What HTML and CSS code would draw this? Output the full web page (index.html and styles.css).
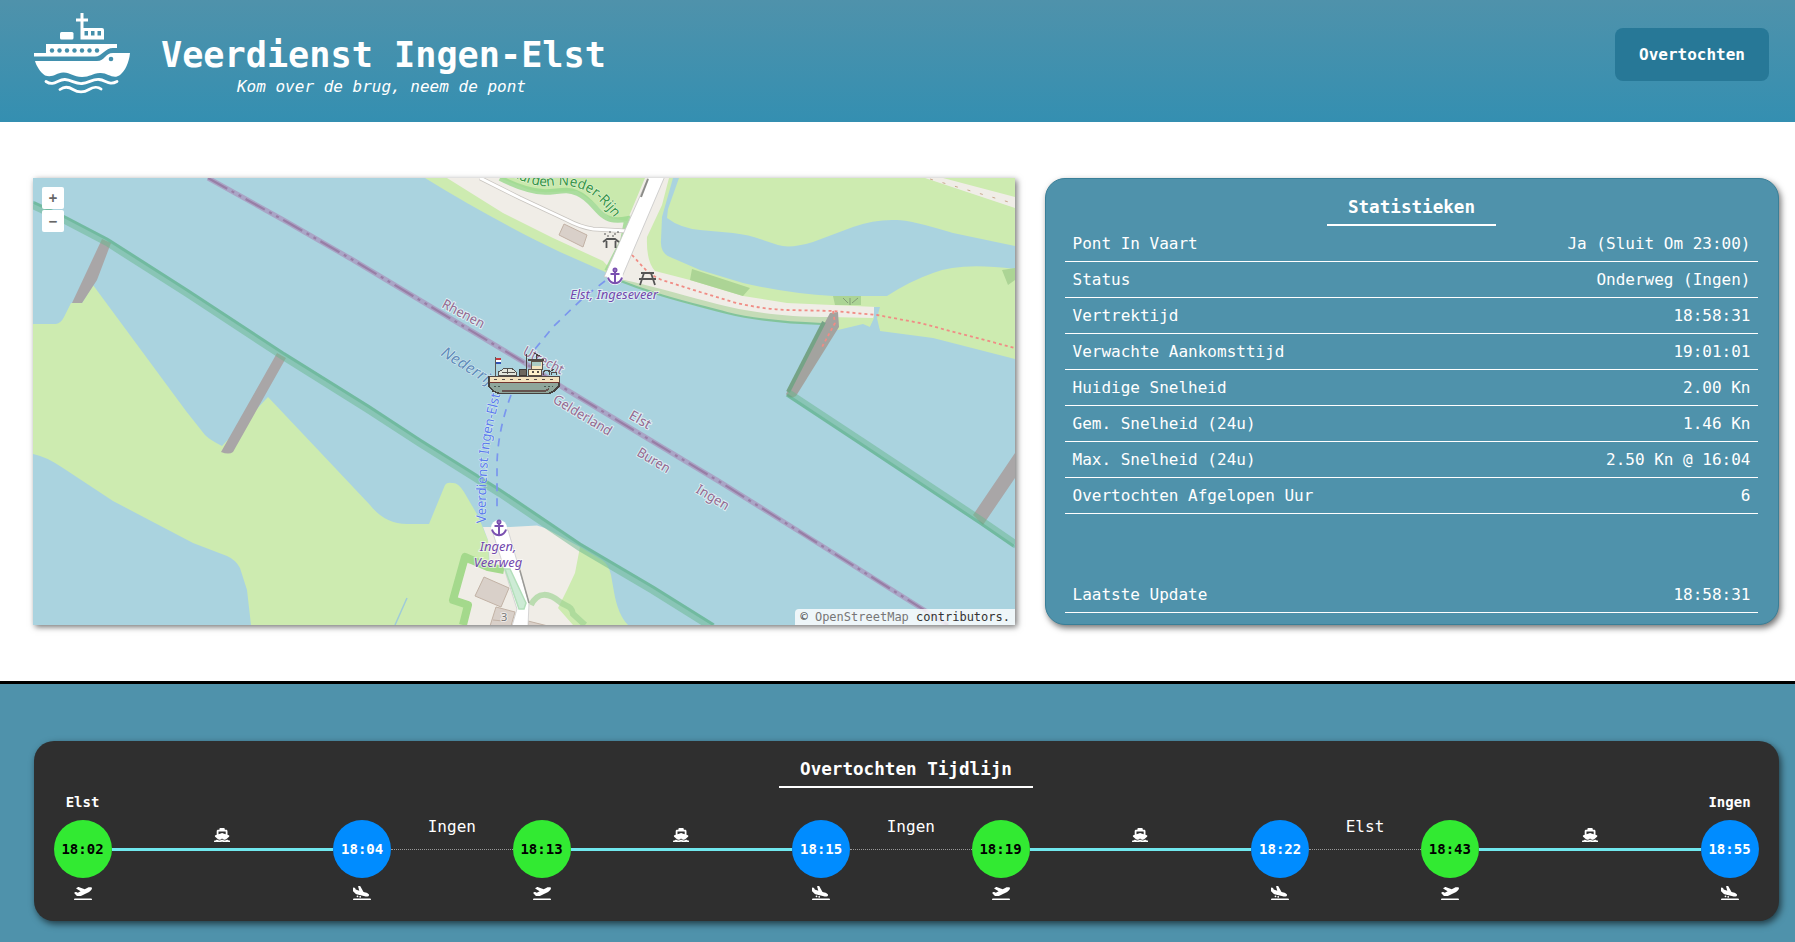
FILE: index.html
```html
<!DOCTYPE html>
<html lang="nl">
<head>
<meta charset="utf-8">
<title>Veerdienst Ingen-Elst</title>
<link rel="stylesheet" href="styles.css">
</head>
<body>
<svg class="defs" aria-hidden="true">
  <symbol id="ship" viewBox="0 0 576 512"><path d="M192 32c0-17.700 14.300-32 32-32L352 0c17.700 0 32 14.300 32 32l0 32 48 0c26.500 0 48 21.500 48 48l0 128 44.400 14.800c23.100 7.700 29.500 37.500 11.500 53.900l-101 92.600c-16.200 9.400-34.700 15.100-50.900 15.100c-19.600 0-40.800-7.700-59.200-20.300c-22.100-15.500-51.600-15.500-73.700 0c-17.100 11.800-38 20.300-59.200 20.300c-16.200 0-34.700-5.700-50.900-15.100l-101-92.600c-18-16.500-11.600-46.200 11.500-53.900L96 240l0-128c0-26.500 21.500-48 48-48l48 0 0-32zM160 218.700l107.800-35.900c13.100-4.400 27.300-4.400 40.500 0L416 218.700l0-90.700-256 0 0 90.700zM306.500 421.900C329 437.400 356.500 448 384 448c26.900 0 55.400-10.800 77.400-26.100c11.900-8.500 28.100-7.800 39.200 1.700c14.400 11.900 32.500 21 50.600 25.200c17.200 4 27.900 21.200 23.900 38.400s-21.200 27.900-38.400 23.900c-24.500-5.700-44.900-16.500-58.200-25C449.500 501.700 417 512 384 512c-31.900 0-60.600-9.900-80.400-18.900c-5.800-2.700-11.100-5.300-15.600-7.700c-4.500 2.400-9.700 5.100-15.600 7.700c-19.800 9-48.500 18.900-80.400 18.900c-33 0-65.500-10.300-94.500-25.800c-13.400 8.400-33.700 19.300-58.200 25c-17.200 4-34.400-6.700-38.400-23.900s6.700-34.400 23.900-38.400c18.100-4.200 36.200-13.300 50.600-25.200c11.100-9.400 27.300-10.100 39.200-1.700c22.100 15.200 50.500 26.100 77.400 26.100c27.500 0 55-10.600 77.500-26.100c11.100-7.900 25.900-7.900 37 0z"/></symbol>
  <symbol id="depart" viewBox="0 0 640 512"><path d="M381 114.900L186.100 41.800c-16.700-6.200-35.200-5.300-51.100 2.700L89.100 67.400C78 73 77.200 88.500 87.600 95.200l146.900 94.500L136 240 77.800 214.100c-8.700-3.900-18.800-3.700-27.300 .6L18.300 230.800c-9.300 4.700-11.800 16.800-5 24.700l73.100 85.300c6.100 7.100 15 11.200 24.300 11.200l137.700 0c5 0 9.900-1.200 14.300-3.400L535.600 212.200c46.500-23.300 82.500-63.300 100.800-112C645.900 75 627.200 48 600.200 48l-57.400 0c-20.200 0-40.200 4.800-58.200 14L381 114.900zM0 480c0 17.700 14.300 32 32 32l576 0c17.700 0 32-14.300 32-32s-14.300-32-32-32L32 448c-17.700 0-32 14.300-32 32z"/></symbol>
  <symbol id="arrive" viewBox="0 0 640 512"><path d="M.3 166.900L0 68C0 57.700 9.500 50.100 19.500 52.300l35.600 7.900c10.600 2.300 19.200 9.900 23 20L96 128l127.300 37.600L181.800 20.400C178.900 10.200 186.600 0 197.200 0l40.100 0c11.600 0 22.200 6.200 27.900 16.300l109 193.800 107.200 31.700c15.900 4.700 30.800 12.500 43.700 22.800l34.400 27.600c24 19.200 18.100 57.300-10.700 68.200c-41.200 15.600-86.200 18.100-128.800 7L121.700 289.800c-11-2.900-21.200-8.600-29.500-16.500L9.800 193.900c-6.100-5.900-9.500-14-9.500-27zM32 448l576 0c17.700 0 32 14.300 32 32s-14.300 32-32 32L32 512c-17.700 0-32-14.300-32-32s14.300-32 32-32zm96-80a32 32 0 1 1 64 0 32 32 0 1 1-64 0zm128-16a32 32 0 1 1 0 64 32 32 0 1 1 0-64z"/></symbol>
  <symbol id="anchor" viewBox="0 0 16 17"><g fill="none" stroke="#7a50b0" stroke-width="2"><circle cx="8" cy="2.500" r="1.500"/><path d="M8 4V16M3.500 6.500H12.500M1 10C2 14 5 15.500 8 15.800C11 15.500 14 14 15 10"/></g></symbol>
</svg>

<header class="header">
  <div class="brand">
    <svg class="logo" viewBox="34 13 97 81" fill="#fff">
      <path d="M80.500 13H83.500V18.500H88V21.500H83.500V28H102Q104 28 104 30V39.500H80.500V21.500H76V18.500H80.500Z"/>
      <rect x="60" y="32" width="13.500" height="7.500" rx="1.500"/>
      <path d="M46 44H117V48H113C105 48 102 56.500 95 56.500H34V53H46Z"/>
      <path d="M35 61H97C105 61 105 53 113 53H130C129 63 125 71 120 75C113 80 108 72.500 100 73C92 73.500 90 77 82 77C73 77 70 72 63 72.500C56 73 53 78 45 75.500C40 72 36.500 66 35 61Z"/>
      <path d="M46 81.500C54 87 58 79 65 79.500C72 80 75 84 82 83.500C89 83 92 79 99 79.500C106 80 109 86 117 81.500M60 89.500C64 86.500 69 87 73 89.500C78 92.500 84 92.500 89 89.500C93 87 98 86.500 101 89" fill="none" stroke="#fff" stroke-width="2.800" stroke-linecap="round"/>
      <g fill="#448fab"><rect x="84.500" y="31" width="3.500" height="4.500"/><rect x="91" y="31" width="3.500" height="4.500"/><rect x="97.500" y="31" width="3.500" height="4.500"/><circle cx="52" cy="50.500" r="2.200"/><circle cx="59.500" cy="50.500" r="2.200"/><circle cx="67" cy="50.500" r="2.200"/><circle cx="74.500" cy="50.500" r="2.200"/><circle cx="82" cy="50.500" r="2.200"/><circle cx="89.500" cy="50.500" r="2.200"/><circle cx="97" cy="50.500" r="2.200"/><circle cx="111" cy="59" r="2.300"/></g>
    </svg>
    <div class="titles">
      <h1>Veerdienst Ingen-Elst</h1>
      <p>Kom over de brug, neem de pont</p>
    </div>
  </div>
  <a class="nav-button">Overtochten</a>
</header>

<main class="main">
  <div class="map">
    <svg class="map-canvas" viewBox="33 178 982 447">
      <rect x="33" y="178" width="982" height="447" fill="#aad3df"/>
      <!-- south bank -->
      <g fill="#cdebb0">
        <path d="M33 324H56Q61 323 64 317L71 303L82 303L93 285L186 411L205 435Q210 440 222 446L268 397L320 452L370 505Q385 524 407 524H429L445 485Q447 482 452 483Q458 482 464 492L478 516L488 540L492 625H251L247 590L240 568Q236 560 227 556L193 543L153 522L113 501L63 468Q45 456 33 454Z"/>
        <path d="M580 547L602 560Q609 565 611 575L614 592Q618 615 628 625H560L552 600Z"/>
        <path d="M425 178C470 206 520 233 560 252L603 271C640 290 680 303 727 313C755 320 790 323 822 324L838 330L863 324L870 327L875 318L880 331L933 338L1015 359V178Z"/>
      </g>
      <path d="M407 598L395 625" stroke="#9fcbd8" stroke-width="1.500"/>
      <path d="M483 527H510L537 525.500L545 528L580 547L575 573L567 590L558 608L573 625H466L470 603L456 598L467 563L490 568L488 540Z" fill="#f0ede7"/>
      <path d="M531 605C538 591 549 593 560 602C567 607 572 606 573 614L585 625" fill="none" stroke="#9cd392" stroke-width="6" opacity=".65"/>
      <path d="M504 570L488 567L465 557L453 600L468 605L463 625" fill="none" stroke="#a4d98c" stroke-width="8" stroke-linejoin="round"/>
      <g fill="#d9d0c9" stroke="#c2b2a5" stroke-width="1"><path d="M484 577L509 588L501 607L475 596Z"/><path d="M496 607L515 612L511 626H490Z"/><path d="M493 620L503 621M528 621L548 626H528Z"/></g>
      <path d="M492 530H508L529 603L528 626H512L517 609Z" fill="#fff" stroke="#ccc" stroke-width=".8"/>
      <path d="M519 567L529 603" stroke="#9a9a96" stroke-width="1.500"/>
      <path d="M505 569L510 569L526 603L524 609L519 609Z" fill="#cdebd5" stroke="#b3dfba" stroke-width="1.500"/>
      <!-- north bank -->
      <path d="M620 279C660 297 690 303 727 313C755 320 790 323 822 324L830 316L760 312L700 297L655 283Z" fill="#c5dcb7"/>
      <path d="M447 178L503 213L553 238L603 261L620 279C660 288 690 297 717 304C745 311 780 317 830 317L873 318L877 307L787 303L743 296L690 280L655 271Q646 261 647 237L662 205L669 178Z" fill="#f0ede7"/>
      <path d="M500 178L520 186Q534 193 550 192L577 191L593 202L610 218L627 221L645 178Z" fill="#c9e9ad"/>
      <path d="M500 178Q525 191 545 192C558 192 566 188 577 193C590 198 596 211 604 216Q612 222 627 219L623 240L607 271" fill="none" stroke="#9ad88d" stroke-width="5.500" opacity=".8"/>
      <path d="M480 178L520 198L567 220Q580 227 593 229L627 231" fill="none" stroke="#c8c5c0" stroke-width="4.500"/>
      <path d="M480 178L520 198L567 220Q580 227 593 229L627 231" fill="none" stroke="#fff" stroke-width="3"/>
      <path d="M564 224L587 235L583 247L559 235Z" fill="#d9d0c9" stroke="#c2b2a5"/>
      <path d="M649 176H665L622 277H604Z" fill="#fff" stroke="#c5c5c5" stroke-width=".8"/>
      <path d="M648 179L641 197" stroke="#8c8c88" stroke-width="2"/>
      <path d="M673 178H679L668 209L667 218Q680 228 700 230L733 233Q750 235 760 239L778 245Q790 249 813 242L853 227Q875 219 897 220Q910 220 953 233L1015 246V269Q960 262 933 273Q910 281 887 296H833Q790 294 743 283L700 270L670 257Q660 253 661 240L662 217Z" fill="#aad3df"/>
      <path d="M692 269L750 288L743 296L690 280ZM833 296H861V305H835ZM1002 270L1015 268V280L1008 285Z" fill="#acd495"/>
      <path d="M843 298L848 303M850 298V305M858 298L852 303" stroke="#829d76" fill="none"/>
      <path d="M925 178H943L1015 197V208Z" fill="#f0ede7"/>
      <path d="M930 179L1012 203" stroke="#c9a88d" stroke-width="1" stroke-dasharray="3 10"/>
      <path d="M874 307H880L877 318L880 331L870 327L874 318Z" fill="#aad3df"/>
      <path d="M610 277C660 297 690 303 727 313C755 320 790 323 822 324" fill="none" stroke="#82c49b" stroke-width="2.200"/>
      <!-- groynes -->
      <path d="M102 239L111 243L97 280L82 303H72ZM277 353L286 358L233 452Q229 455 221 452ZM1015 453V478L983 525L973 515Z" fill="#a9a6a7"/>
      <path d="M830 313L838 312L839 327L796 396Q789 400 786 394Z" fill="#a3a39f"/>
      <path d="M824 322L788 392" stroke="#75a386" stroke-width="4"/>
      <!-- protected area outlines -->
      <g fill="none" stroke="#68b88d" stroke-opacity=".5" stroke-width="8"><path d="M33 205L65 220L107 242L187 293L283 356L368 409L420 443L500 493L580 547L653 590L712 627"/><path d="M788 393L867 445L980 520L1015 544"/></g>
      <g fill="none" stroke="#3da16e" stroke-opacity=".3" stroke-width="3"><path d="M33 202L65 217L107 239L187 290L283 353L368 406L420 440L500 490L580 544L653 587L714 625"/><path d="M787 395L867 448L980 523L1015 547"/></g>
      <!-- municipal border -->
      <path d="M208 178L287 222L353 260L433 308L520 360L567 390L720 482L800 532L948 625" fill="none" stroke="#a983b3" stroke-opacity=".58" stroke-width="5"/>
      <path d="M208 178L287 222L353 260L433 308L520 360L567 390L720 482L800 532L948 625" fill="none" stroke="#875885" stroke-opacity=".5" stroke-width="2.200" stroke-dasharray="22 5 3 5 3 5"/>
      <!-- footpaths -->
      <path d="M632 255L643 267Q650 275 662 280L700 292L733 302Q760 309 787 310L833 311L877 315L920 323L1015 348M833 311L835 323L822 347" fill="none" stroke="#f08c85" stroke-width="1.800" stroke-dasharray="3 3"/>
      <!-- ferry route -->
      <path d="M605 281L583 298L553 327L535 349M511 395Q498 430 497 463V513" fill="none" stroke="#7a96ee" stroke-width="1.700" stroke-dasharray="8 7"/>
      <circle cx="615" cy="277" r="8" fill="#fff"/><circle cx="499" cy="528" r="8" fill="#fff"/>
      <use href="#anchor" x="607" y="267" width="16" height="18"/>
      <use href="#anchor" x="491" y="519" width="16" height="18"/>
      <g fill="none" stroke="#555" stroke-width="1.800"><path d="M603 242L607 239H615L619 242M606.500 241V248M615.500 241V248"/><path d="M641 273H654M639 279H656M644 273L640 285M651 273L655 285"/><path d="M604 234h2M609 232h2M614 234h2M607 236h2M612 236h2M617 232h2" stroke-width="1"/></g>
      <path id="park" d="M512 176Q532 187 550 186C570 183 587 189 597 199Q607 208 616 220" fill="none"/>
      <path id="route" d="M486 523Q485 470 492 430L501 391" fill="none"/>
      <g class="map-label border-label">
        <text transform="translate(441 307) rotate(28)" textLength="46" lengthAdjust="spacingAndGlyphs">Rhenen</text>
        <text transform="translate(522 354) rotate(28)" textLength="44" lengthAdjust="spacingAndGlyphs">Utrecht</text>
        <text transform="translate(552 402) rotate(31)" textLength="66" lengthAdjust="spacingAndGlyphs">Gelderland</text>
        <text transform="translate(628 418) rotate(30)" textLength="23" lengthAdjust="spacingAndGlyphs">Elst</text>
        <text transform="translate(636 455) rotate(31)" textLength="36" lengthAdjust="spacingAndGlyphs">Buren</text>
        <text transform="translate(695 492) rotate(31)" textLength="36" lengthAdjust="spacingAndGlyphs">Ingen</text>
      </g>
      <text class="map-label river-label" transform="translate(440 355) rotate(32)" textLength="67" lengthAdjust="spacingAndGlyphs">Nederrijn</text>
      <text class="map-label park-label"><textPath href="#park" textLength="116" lengthAdjust="spacingAndGlyphs">aarden Neder-Rijn</textPath></text>
      <text class="map-label route-label"><textPath href="#route" textLength="130" lengthAdjust="spacingAndGlyphs">Veerdienst Ingen-Elst</textPath></text>
      <g class="map-label stop-label"><text x="614" y="299" textLength="88">Elst, Ingeseveer</text><text x="498" y="551">Ingen,</text><text x="498" y="567">Veerweg</text></g>
      <text class="map-label house-number" x="501" y="621">3</text>
      <!-- ferry -->
      <g shape-rendering="crispEdges">
        <path d="M495 357V377" stroke="#5b5754" stroke-width="1"/><path d="M496 358H501V360H496Z" fill="#c43b42"/><path d="M496 360H501V362H496Z" fill="#fff"/><path d="M496 362H501V364H496Z" fill="#3153b5"/>
        <path d="M489 377H559V386L554 391L549 393.500H499L493 391L489 386Z" fill="#8fa69b" stroke="#45413e" stroke-width="1.500"/>
        <path d="M489 376H559V382H489Z" fill="#f4e3bf" stroke="#514945"/>
        <path d="M490 382.500H559" stroke="#74352f" stroke-width="1"/><path d="M494 379H555" stroke="#57504a" stroke-width="1" stroke-dasharray="3 5"/>
        <path d="M502 391H545L549 389" stroke="#65534f" stroke-width="2" fill="none"/><path d="M494 386H502M544 386H553" stroke="#485a52" stroke-dasharray="2 2"/>
        <path d="M498 375V372L502 370L504 368.500H512L516 372V375Z" fill="#e3e6dc" stroke="#53504d"/><path d="M507 369V374M502 372H515" stroke="#53504d"/>
        <rect x="519" y="369" width="7" height="6" fill="#6d675f" stroke="#3f3b38"/>
        <rect x="528" y="369" width="13" height="6" fill="#fff1cc" stroke="#5b5147"/><rect x="531" y="361" width="11" height="8" fill="#f2e4bf" stroke="#5b5147"/><rect x="532" y="362" width="9" height="4" fill="#a9cbc4"/><path d="M528 360H544" stroke="#504945" stroke-width="2"/>
        <path d="M526 354V370M536 359V355H540M534 353L538 355" stroke="#4c4644" fill="none"/><path d="M532 372H534M537 372H539" stroke="#57504a" stroke-width="2"/>
        <path d="M543 375V372L546 370H549V375M551 375V372H556V375M547 370L550 372L554 369" fill="none" stroke="#504b48"/>
      </g>
    </svg>
    <div class="zoom"><button>+</button><button>−</button></div>
    <div class="attribution">© <span>OpenStreetMap</span> contributors.</div>
  </div>

  <section class="stats">
    <h2>Statistieken</h2>
    <dl>
      <div><dt>Pont In Vaart</dt><dd>Ja (Sluit Om 23:00)</dd></div>
      <div><dt>Status</dt><dd>Onderweg (Ingen)</dd></div>
      <div><dt>Vertrektijd</dt><dd>18:58:31</dd></div>
      <div><dt>Verwachte Aankomsttijd</dt><dd>19:01:01</dd></div>
      <div><dt>Huidige Snelheid</dt><dd>2.00 Kn</dd></div>
      <div><dt>Gem. Snelheid (24u)</dt><dd>1.46 Kn</dd></div>
      <div><dt>Max. Snelheid (24u)</dt><dd>2.50 Kn @ 16:04</dd></div>
      <div><dt>Overtochten Afgelopen Uur</dt><dd>6</dd></div>
      <div class="updated"><dt>Laatste Update</dt><dd>18:58:31</dd></div>
    </dl>
  </section>
</main>

<section class="crossings">
  <div class="card">
    <h2>Overtochten Tijdlijn</h2>
    <div class="timeline">
      <div class="stop"><b>Elst</b><span class="time">18:02</span><svg class="plane"><use href="#depart"/></svg></div>
      <div class="sail"><svg><use href="#ship"/></svg></div>
      <div class="stop"><b></b><span class="time end">18:04</span><svg class="plane"><use href="#arrive"/></svg></div>
      <div class="wait">Ingen</div>
      <div class="stop"><b></b><span class="time">18:13</span><svg class="plane"><use href="#depart"/></svg></div>
      <div class="sail"><svg><use href="#ship"/></svg></div>
      <div class="stop"><b></b><span class="time end">18:15</span><svg class="plane"><use href="#arrive"/></svg></div>
      <div class="wait">Ingen</div>
      <div class="stop"><b></b><span class="time">18:19</span><svg class="plane"><use href="#depart"/></svg></div>
      <div class="sail"><svg><use href="#ship"/></svg></div>
      <div class="stop"><b></b><span class="time end">18:22</span><svg class="plane"><use href="#arrive"/></svg></div>
      <div class="wait">Elst</div>
      <div class="stop"><b></b><span class="time">18:43</span><svg class="plane"><use href="#depart"/></svg></div>
      <div class="sail"><svg><use href="#ship"/></svg></div>
      <div class="stop"><b>Ingen</b><span class="time end">18:55</span><svg class="plane"><use href="#arrive"/></svg></div>
    </div>
  </div>
</section>
</body>
</html>
```

FILE: styles.css
```css
* { box-sizing: border-box; }
body {
  margin: 0;
  height: 942px;
  overflow: hidden;
  display: flex;
  flex-direction: column;
  background: #fff;
  color: #fff;
  font: 16px/19px "DejaVu Sans Mono", monospace;
}
h1, h2, p, dl, dd { margin: 0; }
.defs { position: absolute; width: 0; height: 0; }

.header {
  flex: none;
  height: 122px;
  display: flex;
  justify-content: space-between;
  align-items: flex-start;
  padding: 13px 26px 0 34px;
  background: linear-gradient(#4f92ab, #348fb1);
}
.brand { display: flex; gap: 30px; }
.logo { width: 97px; height: 81px; }
.titles { padding-top: 21px; text-align: center; }
h1 { font-size: 35.2px; line-height: 42px; }
.titles p { font-style: italic; line-height: 19px; padding: 1px 4px 0 0; }
.nav-button {
  margin-top: 15px;
  padding: 17px 24px;
  border-radius: 8px;
  background: #277897;
  font-weight: bold;
}

.main {
  flex: none;
  display: flex;
  gap: 30px;
  height: 559px;
  padding: 56px 16px 56px 33px;
}
.map {
  position: relative;
  width: 982px;
  box-shadow: 2px 2px 6px rgba(0, 0, 0, .55);
}
.map-canvas { display: block; width: 982px; height: 447px; }
.map-label {
  font-family: "Noto Sans", sans-serif;
  font-size: 13.5px;
  paint-order: stroke;
  stroke: rgba(255, 255, 255, .6);
  stroke-width: 2px;
}
.border-label { fill: #946a90; }
.river-label { fill: #5f8cba; font-size: 15.5px; font-style: italic; stroke-width: 1px; }
.park-label { fill: #359447; font-size: 14px; stroke-width: 1px; }
.route-label { fill: #5b7cec; stroke-width: 1px; }
.stop-label { fill: #7248ad; font-size: 13px; font-style: italic; text-anchor: middle; }
.house-number { fill: #777; font-size: 11px; }
.zoom {
  position: absolute;
  left: 9px;
  top: 9px;
  display: grid;
  gap: 1px;
}
.zoom button {
  width: 22px;
  height: 22px;
  padding: 0;
  border: 0;
  border-radius: 2px;
  background: #fff;
  color: #666;
  font: bold 14px/22px "DejaVu Sans Mono", monospace;
}
.attribution {
  position: absolute;
  right: 0;
  bottom: 0;
  padding: 0 5px;
  border-radius: 4px 0 0;
  background: rgba(255, 255, 255, .8);
  color: #333;
  font-size: 12px;
  line-height: 16px;
}
.attribution span { color: #777; }

.stats {
  flex: 1;
  display: flex;
  flex-direction: column;
  padding: 19px 20px 11px 19px;
  border: 1px solid #397f98;
  border-radius: 20px;
  background: #4f92ab;
  box-shadow: 2px 3px 6px rgba(0, 0, 0, .55);
}
h2 {
  align-self: center;
  padding: 0 21px 7px;
  border-bottom: 2px solid #fff;
  font-size: 17.6px;
  line-height: 19px;
}
dl { flex: 1; display: flex; flex-direction: column; }
dl div {
  display: flex;
  justify-content: space-between;
  padding: 8px 7.5px;
  border-bottom: 1px solid #fff;
}
dl .updated { margin-top: auto; }

.crossings {
  flex: 1;
  padding: 57px 16.5px 0 33.5px;
  border-top: 3px solid #000;
  background: #4f92ab;
}
.card {
  display: flex;
  flex-direction: column;
  height: 180px;
  padding: 19px 20px 0;
  border-radius: 20px;
  background: #2f2f2f;
  box-shadow: 2px 3px 7px rgba(0, 0, 0, .6);
}
.timeline { display: flex; padding-top: 4px; }
.stop {
  width: 58px;
  display: flex;
  flex-direction: column;
  align-items: center;
  font-size: 14px;
}
.stop b { height: 28px; line-height: 21px; }
.time {
  width: 58px;
  height: 58px;
  border-radius: 50%;
  background: #32ea32;
  color: #000;
  font-weight: bold;
  line-height: 58px;
  text-align: center;
}
.time.end { background: #008cff; color: #fff; }
.plane { width: 18px; height: 14.4px; margin-top: 8px; fill: #fff; }
.sail {
  flex: 1;
  height: 59px;
  display: flex;
  justify-content: center;
  align-items: flex-end;
  padding-bottom: 6px;
  border-bottom: 3px solid #70e8ee;
}
.sail svg { width: 16.2px; height: 14.4px; fill: #fff; }
.wait {
  height: 58px;
  padding: 25px 36.6px 0;
  border-bottom: 1px dotted #999;
}
```
